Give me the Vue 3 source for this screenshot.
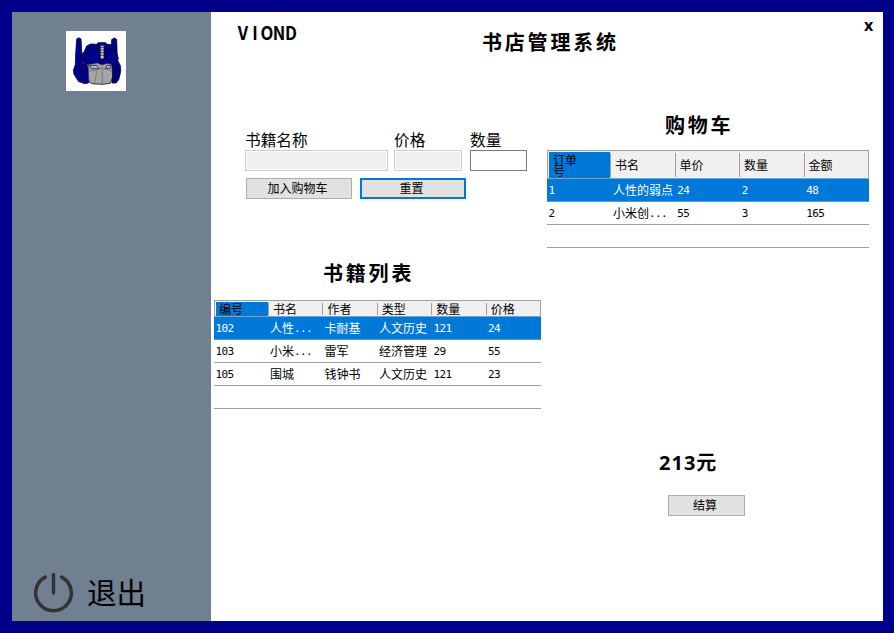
<script setup>
import { ref } from 'vue'

const bookName = ref('')
const price = ref('')
const quantity = ref('')

const cartColumns = ['订单号', '书名', '单价', '数量', '金额']
const cartRows = [
  ['1', '人性的弱点', '24', '2', '48'],
  ['2', '小米创...', '55', '3', '165'],
  ['', '', '', '', ''],
]

const bookColumns = ['编号', '书名', '作者', '类型', '数量', '价格']
const bookRows = [
  ['102', '人性...', '卡耐基', '人文历史', '121', '24'],
  ['103', '小米...', '雷军', '经济管理', '29', '55'],
  ['105', '围城', '钱钟书', '人文历史', '121', '23'],
  ['', '', '', '', '', ''],
]

// Splits a cell into runs so that digits and dots keep a half-width pitch.
const runs = (text) =>
  (text.match(/[\x00-\x7f]+|[^\x00-\x7f]+/g) || []).map((t) => ({ t, half: t.charCodeAt(0) < 128 }))
</script>

<template>
  <div class="window">
    <aside class="sidebar">
      <svg class="logo" viewBox="30 30 180 180">
        <rect x="30" y="30" width="180" height="180" fill="#fff" />
        <g fill="#00008f" stroke="#050528" stroke-width="2.5" stroke-linejoin="round">
          <path d="M62 54L68 50L75 54L77 90V126L84 186L68 182L54 160L52 148L58 132L59 100Z" />
          <path d="M167 56L174 51L182 55L184 116L193 134L194 152L188 176L180 186L168 186L166 130Z" />
          <path d="M76 98L84 94L92 75L104 69L122 70L126 65H149L153 70L168 71L177 84L187 112L181 128L94 130L76 122Z" />
          <path d="M76 126L92 130L98 148L98 186L82 188L77 176Z" />
          <path d="M168 128L181 125L187 150L185 174L170 185Z" />
        </g>
        <g fill="none" stroke="#03033c" stroke-width="2.5">
          <path d="M92 76L90 98L79 100M104 70L102 92L120 98M122 70L125 110L139 119L150 111L152 70M168 72L169 92L153 98M90 104L94 127M183 110L169 115M56 135L77 140M57 154L80 152M80 151H98M169 150H187" />
        </g>
        <path d="M96 130L124 125L138 132L153 126L168 130L170 168L163 187L139 190L106 188L97 178Z" fill="#a5a5a5" stroke="#111" stroke-width="2.5" />
        <path d="M101 133H122L129 143H106ZM148 143L153 133H166L162 142Z" fill="#9dbce8" stroke="#18244e" stroke-width="2.5" />
        <path d="M98 150L123 147L139 140L156 147L168 150M139 142V190M123 148L116 187M98 169L103 185" fill="none" stroke="#555" stroke-width="1.6" />
        <path d="M133 73H144V111L138 115L133 110Z" fill="#ccc" stroke="#111" stroke-width="2" />
        <path d="M133 79H144M133 87H144M133 95H144M133 103H144" stroke="#111" stroke-width="2" />
      </svg>
      <div class="exit">
        <svg class="power" viewBox="0 0 40 40" fill="none" stroke="#333" stroke-width="3.4" stroke-linecap="round">
          <path d="M12 5A17.4 17.4 0 1 0 28 5" />
          <path d="M20 2.4V20.5" />
        </svg>
        <span class="exit-label">退出</span>
      </div>
    </aside>

    <main class="main">
      <header class="header">
        <div class="brand"><span v-for="(c, i) in 'VIOND'" :key="i">{{ c }}</span></div>
        <h1 class="title">书店管理系统</h1>
        <div class="close">x</div>
      </header>

      <div class="columns">
        <section class="left">
          <form class="form" @submit.prevent>
            <div class="fields">
              <label class="field name"><span>书籍名称</span><input v-model="bookName" disabled /></label>
              <label class="field price"><span>价格</span><input v-model="price" disabled /></label>
              <label class="field qty"><span>数量</span><input v-model="quantity" /></label>
            </div>
            <div class="actions">
              <button class="btn">加入购物车</button>
              <button class="btn focused">重置</button>
            </div>
          </form>
          <h2 class="heading list-heading">书籍列表</h2>
          <div class="grid books">
            <div class="row head">
              <div v-for="(c, i) in bookColumns" :key="i" class="cell"><span>{{ c }}</span></div>
            </div>
            <div v-for="(r, i) in bookRows" :key="i" class="row" :class="{ selected: i === 0 }">
              <div v-for="(c, j) in r" :key="j" class="cell"><span v-for="(s, k) in runs(c)" :key="k" :class="{ half: s.half }">{{ s.t }}</span></div>
            </div>
          </div>
        </section>

        <section class="right">
          <h2 class="heading cart-heading">购物车</h2>
          <div class="grid cart">
            <div class="row head">
              <div v-for="(c, i) in cartColumns" :key="i" class="cell"><span>{{ c }}</span></div>
            </div>
            <div v-for="(r, i) in cartRows" :key="i" class="row" :class="{ selected: i === 0 }">
              <div v-for="(c, j) in r" :key="j" class="cell"><span v-for="(s, k) in runs(c)" :key="k" :class="{ half: s.half }">{{ s.t }}</span></div>
            </div>
          </div>
          <div class="total"><span class="amount">213</span>元</div>
          <button class="btn checkout">结算</button>
        </section>
      </div>
    </main>
  </div>
</template>

<style>
body {
  margin: 0;
}
</style>

<style scoped>
* {
  box-sizing: border-box;
}
.window {
  display: flex;
  width: 894px;
  height: 633px;
  border: 12px solid #00008b;
  border-right-width: 11px;
  background: #fff;
  color: #000;
  font-family: 'Noto Sans CJK SC', sans-serif;
  overflow: hidden;
}
.sidebar {
  display: flex;
  flex-direction: column;
  justify-content: space-between;
  width: 199px;
  flex: none;
  padding: 19px 0 8px;
  background: #708090;
}
.logo {
  width: 60px;
  height: 60px;
  margin-left: 54px;
}
.exit {
  display: flex;
  align-items: center;
  height: 42px;
  padding-left: 21px;
}
.power {
  width: 41px;
  height: 41px;
}
.exit-label {
  margin: -2px 0 0 13px;
  font-size: 29.5px;
  line-height: 40px;
}
.main {
  width: 672px;
}
.header {
  display: flex;
  height: 60px;
}
.brand {
  display: flex;
  width: 60px;
  height: 24px;
  margin: 8px 0 0 26px;
  font: bold 19px/24px 'Noto Sans CJK SC', sans-serif;
}
.brand span {
  display: flex;
  justify-content: center;
  width: 12px;
  transform: scaleX(0.88);
}
.title {
  width: 140px;
  margin: 15px 0 0 185px;
  font-size: 20px;
  line-height: 30px;
  letter-spacing: 2.8px;
  white-space: nowrap;
}
.close {
  margin: 3px 0 0 242px;
  font: bold 16px/21px 'Noto Sans', sans-serif;
}
.columns {
  display: flex;
  gap: 6px;
  padding-left: 3px;
}
.left {
  width: 327px;
}
.right {
  width: 322px;
  display: flex;
  flex-direction: column;
}
.form {
  padding: 58px 0 0 31px;
}
.fields {
  display: flex;
}
.field {
  display: flex;
  flex-direction: column;
  font-size: 15.7px;
  line-height: 20px;
}
.field input {
  width: 100%;
  height: 21px;
  padding: 0;
  border: 1px solid #7a7a7a;
  border-radius: 0;
  background: #fff;
  outline: none;
}
.field input:disabled {
  border-color: #ccc;
  background: #f0f0f0;
  box-shadow: inset 0 0 0 1px #fff;
}
.name {
  width: 143px;
}
.price {
  width: 68px;
  margin-left: 6px;
}
.qty {
  width: 57px;
  margin-left: 8px;
}
.actions {
  display: flex;
  gap: 8px;
  padding: 7px 0 0 1px;
}
.btn {
  width: 106px;
  height: 21px;
  padding: 0 3px 2px 0;
  border: 1px solid #adadad;
  border-radius: 0;
  background: #e1e1e1;
  color: #000;
  font: 12px/17px 'Noto Sans CJK SC', sans-serif;
}
.btn.focused {
  border: 2px solid #0078d7;
  line-height: 15px;
}
.heading {
  margin: 0;
  font-size: 20px;
  line-height: 30px;
  letter-spacing: 2.8px;
}
.list-heading {
  margin: 59px 0 0 109px;
}
.cart-heading {
  margin: 38px 0 0 118px;
}
.grid {
  font-size: 12px;
  line-height: 22px;
}
.row {
  display: flex;
  height: 23px;
  border-bottom: 1px solid #a0a0a0;
}
.cell {
  flex: 1 1 0;
  min-width: 0;
  padding-left: 1.5px;
  white-space: pre;
}
.half {
  font-family: 'DejaVu Sans Mono', monospace;
  font-size: 11px;
  letter-spacing: -0.62px;
  line-height: 1;
  vertical-align: 1px;
}
.row.selected {
  background: #0078d7;
  border-bottom-color: #5a9bce;
  color: #fff;
}
.row.head {
  border: 1px solid #a0a0a0;
  border-bottom-color: #6fa6d0;
  background: #f0f0f0;
}
.head .cell {
  display: flex;
  align-items: center;
  padding-left: 0;
}
.head .cell:not(:first-child)::before {
  content: '';
  width: 1px;
  height: calc(100% - 3px);
  margin: 1px 4px 0 0;
  flex: none;
  background: #a0a0a0;
}
.head .cell:first-child {
  flex: none;
  width: 52px;
  margin: 1px 0 0 1px;
  padding-left: 3px;
  background: #0078d7;
}
.books {
  margin-top: 12px;
}
.books .head {
  height: 17px;
  line-height: 14px;
}
.cart {
  margin-top: 10px;
}
.cart .head {
  height: 29px;
  line-height: 11px;
}
.cart .head .cell:first-child {
  width: 61px;
  padding-left: 4px;
  white-space: normal;
}
.cart .head .cell:first-child span {
  width: 25px;
  word-break: break-all;
}
.total {
  margin: 199px 0 0 112px;
  font-size: 20px;
  font-weight: bold;
  line-height: 30px;
}
.amount {
  font-family: 'Noto Sans', sans-serif;
  letter-spacing: 1px;
}
.checkout {
  width: 77px;
  margin: 17px 0 0 121px;
}
</style>
